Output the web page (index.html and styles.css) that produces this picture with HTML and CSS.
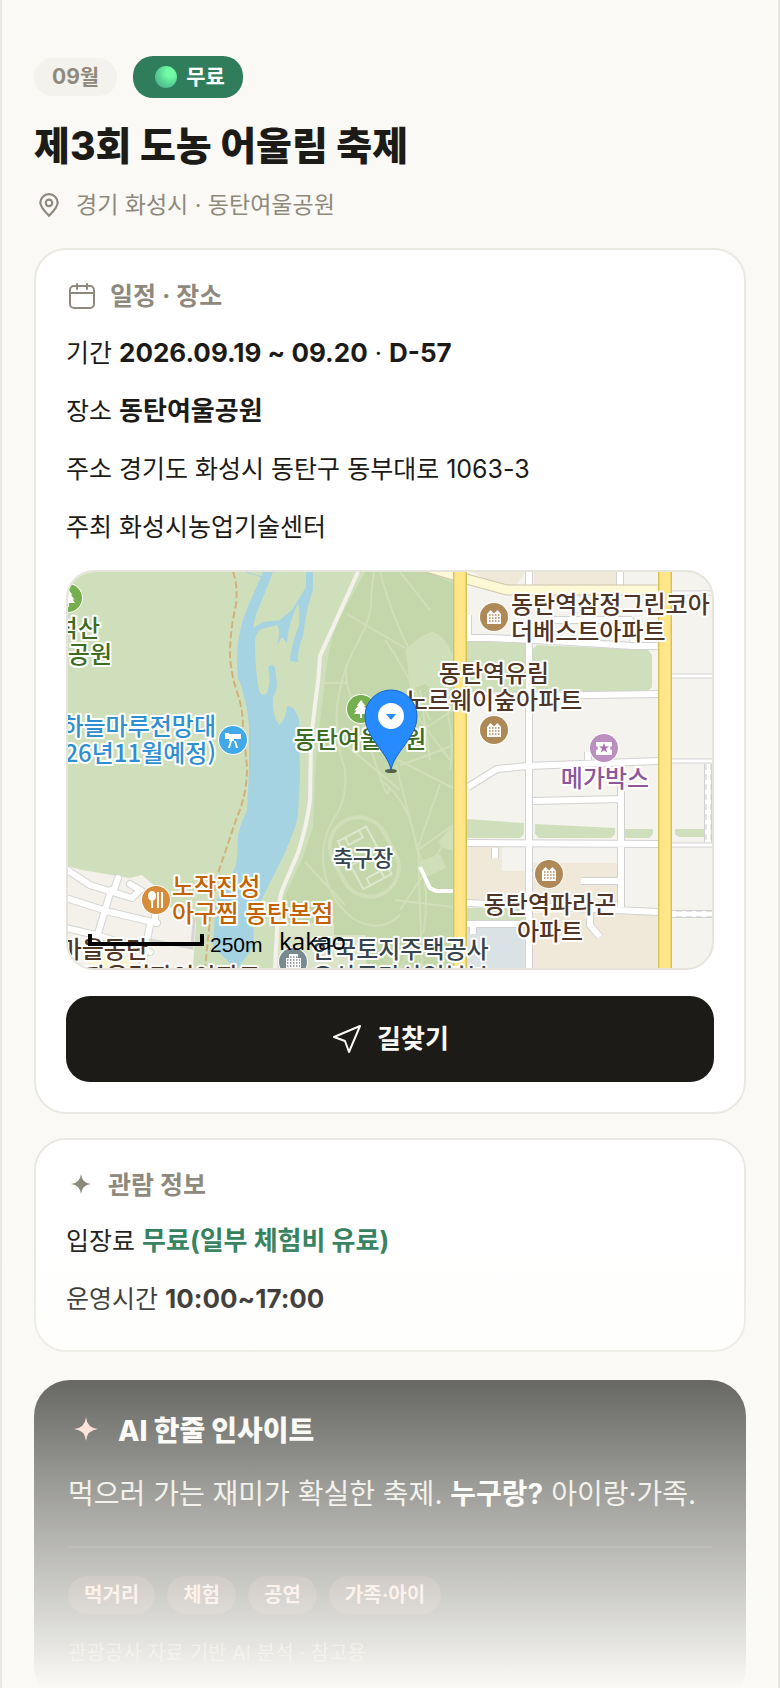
FILE: index.html
```html
<!DOCTYPE html>
<html lang="ko">
<head>
  <meta charset="UTF-8">
  <meta name="viewport" content="width=device-width, initial-scale=1.0">
  <title>제3회 도농 어울림 축제</title>
  <link rel="stylesheet" href="styles.css">
</head>
<body>
  <main class="page">
    <header class="hero">
      <div class="badges">
        <span class="badge">09월</span>
        <span class="badge badge-free"><span class="dot"></span>무료</span>
      </div>
      <h1>제3회 도농 어울림 축제</h1>
      <p class="location">
        <svg class="icon-pin" viewBox="0 0 24 24" fill="none" stroke="currentColor" stroke-width="2">
          <path d="M12 22c4.6-4.6 8-8.2 8-12a8 8 0 0 0-16 0c0 3.8 3.4 7.4 8 12z"/>
          <circle cx="12" cy="10" r="3"/>
        </svg>
        경기 화성시 · 동탄여울공원
      </p>
    </header>

    <section class="card">
      <h2>
        <svg class="icon-cal" viewBox="0 0 32 32" fill="none" stroke="currentColor" stroke-width="2" stroke-linecap="round">
          <rect x="4" y="6" width="24" height="22" rx="4"/>
          <path d="M4 13h24M11 4v5M21 4v5"/>
        </svg>
        일정 · 장소
      </h2>
      <p class="row">기간 <b>2026.09.19 ~ 09.20</b> · <b>D-57</b></p>
      <p class="row">장소 <b>동탄여울공원</b></p>
      <p class="row">주소 경기도 화성시 동탄구 동부대로 1063-3</p>
      <p class="row">주최 화성시농업기술센터</p>

      <div class="map">
        <svg viewBox="68 572 644 396" preserveAspectRatio="xMidYMid slice" role="img" aria-label="동탄여울공원 지도">
          <defs>
            <g id="apt">
              <circle r="15" fill="#fff"/>
              <circle r="14" fill="#ae8957"/>
              <path d="M-7 7V-3l3.500-4L0-3.500 3.500-7 7-3V7z" fill="#fff"/>
              <path d="M-5-2H6M-5 1H6M-5 4H6" stroke="#ae8957" stroke-width="1.500" stroke-dasharray="1.500 1.500"/>
            </g>
            <g id="tree">
              <circle r="15" fill="#fff"/>
              <circle r="14" fill="#76b04e"/>
              <path d="M0-9l4.500 6H3l3.500 4.500H4.500L7 5H1v4h-2V5h-6l2.500-3.500h-2L-3-3h-1.500z" fill="#fff"/>
            </g>
          </defs>

          <!-- land -->
          <rect x="68" y="572" width="644" height="396" fill="#d0dfbb"/>
          <path d="M365 572L345 608Q330 635 327 665Q321 710 316 760L313 827L303 857L283 900L278 968H460V586L428 572z" fill="#c4d7aa"/>
          <path d="M405 650Q420 635 432 632Q444 634 453 655V700L440 694L425 684L410 690L407 660zM453 825L438 842Q446 852 453 850zM418 862L440 854L446 868L424 878z" fill="#cfdfba"/>
          <path d="M279 923H334V935H366V968H276z" fill="#dbe3c8"/>

          <!-- park paths -->
          <g fill="none" stroke="#d0dfba" stroke-width="2">
            <path d="M374 572Q371 590 371 605C368 635 347 650 340 690C333 715 338 750 345 770Q347 795 338 812Q322 835 323 860Q325 895 352 918Q380 935 400 915"/>
            <path d="M380 572Q395 625 410 650M347 614L405 648M325 683H348M346 665Q345 695 360 712M340 740L400 790M353 700L385 790Q389 798 389 786M396 765L418 850L422 968M418 850L453 825M418 850Q430 880 424 930L400 968M405 700L450 760M398 760L453 788M420 690L430 760M453 710L400 745M445 700Q455 740 450 770M400 765Q430 755 453 745M440 784L417 850M400 910L453 830M395 900L453 907M380 780Q410 800 417 850M305 862L345 905M400 572L430 610M385 640Q400 660 430 720"/>
            <g transform="rotate(-28 362 857)">
              <rect x="335" y="817" width="58" height="82" rx="29" stroke-width="4"/>
              <rect x="348" y="832" width="32" height="54" stroke="#dce7cd"/>
              <path d="M348 859h32M356 832v8h16v-8M356 886v-8h16v8" stroke="#dce7cd"/>
            </g>
          </g>

          <!-- river -->
          <path d="M263 572L252 597Q242 620 241 627Q235 650 238 678Q243 690 243 693Q248 710 249 727L249 770L247 810Q238 830 238 837L237 857Q236 868 232 873L220 893Q214 905 215 915L213 947L227 960L232 968H238L253 947L254 920Q256 910 263 897L283 857Q297 825 298 815L300 777L299 720Q295 706 287 706Q286 720 279 725Q272 715 273 697Q277 690 277 683L275 668Q271 661 268 668Q271 680 268 690Q263 700 259 690Q255 670 255 640Q257 630 262 629L277 625Q281 630 277 645L282 637L287 643Q288 625 298 603Q300 612 299 625Q291 645 290 661L298 662Q297 650 303 636Q307 605 313 590V572H306V587L292 610L280 620L263 622L253 628Q255 615 262 600L273 572z" fill="#a6d3e1"/>
          <path d="M246 572L262 577" stroke="#a6d3e1"/>
          <path d="M233 572Q238 585 236 605Q230 630 230 655Q231 675 238 695Q243 710 243 727L247 767Q247 795 237 817L218 873Q213 895 210 920L205 968" fill="none" stroke="#d2b07c" stroke-width="2" stroke-dasharray="7 3"/>
          <path d="M358 572L320 656Q319 680 315 705L311 740L310 800Q307 825 298 853L283 888Q278 900 277 930L275 968" fill="none" stroke="#f4f1ec" stroke-width="4"/>

          <!-- west village -->
          <path d="M68 866L82 870L130 878L142 875L157 888V900L196 922L193 968H68z" fill="#f3f1ea"/>
          <path d="M92 955Q110 945 128 958L140 968H90z" fill="#fdf6d2"/>
          <g fill="none" stroke-linecap="round">
            <path d="M66 869L90 885L132 898M111 890L97 937M66 898L110 912L157 923M150 925L143 962M66 928L100 936L150 952M132 898L140 890L130 884M118 878L114 890M155 900V922" stroke="#d5d5d3" stroke-width="8"/>
            <path d="M66 869L90 885L132 898M111 890L97 937M66 898L110 912L157 923M150 925L143 962M66 928L100 936L150 952M132 898L140 890L130 884M118 878L114 890M155 900V922" stroke="#fff" stroke-width="6"/>
            <path d="M194 920L192 948L150 940" stroke="#d5d5d3" stroke-width="3"/>
          </g>

          <!-- east blocks -->
          <path d="M466 572H712V968H466z" fill="#f4f3ee"/>
          <path d="M474 572H525L514 589L490 584zM534 572H616V588H534zM467 847H502V871H527V902H467zM533 863H617V907H533zM533 913H658V968H533z" fill="#f0e8d9"/>
          <path d="M467 924H525V968H467z" fill="#dae2e6"/>
          <path d="M467 641L526 643V692H467zM537 645L648 650L652 655V687L648 691H533V649zM467 819L524 823V834L520 838H467zM535 824L615 828V834L611 838H539L535 834zM625 829H653V834L649 838H625zM675 829H706V837H679L675 834zM467 908H525V922H467z" fill="#d0dfbb"/>
          <g fill="none">
            <path d="M467 638H490L554 641L633 646H657M467 697L658 694M529 572V590M620 572V590M529 640V968M468 787L497 769L527 766L658 761M533 801L621 799M621 785V907M467 843L658 844M467 903L658 912M495 848V858M581 881H618M590 905V925L600 937M467 924H525M473 926V934M708 764V842M672 914H712M554 620H630Q636 624 633 642M468 615V636M588 760V752" stroke="#d2d2d2" stroke-width="8"/>
            <path d="M467 638H490L554 641L633 646H657M467 697L658 694M529 572V590M620 572V590M529 640V968M468 787L497 769L527 766L658 761M533 801L621 799M621 785V907M467 843L658 844M467 903L658 912M495 848V858M581 881H618M590 905V925L600 937M467 924H525M473 926V934M708 764V842M672 914H712M554 620H630Q636 624 633 642M468 615V636M588 760V752" stroke="#fff" stroke-width="6"/>
            <path d="M672 593H712M672 676H712M672 845H712M672 761H712" stroke="#d2d2d2" stroke-width="5"/>
            <path d="M672 593H712M672 676H712M672 845H712M672 761H712" stroke="#fff" stroke-width="3"/>
            <path d="M706 764V842M711 764V842M676 911H712M676 917H712" stroke="#cbcbcb" stroke-dasharray="6 4"/>
            <path d="M420 867L430 888L436 891H455" stroke="#fff" stroke-width="4"/>
            <path d="M430 568L470 580L507 590H658" stroke="#cfc6ac" stroke-width="11"/>
            <path d="M430 568L470 580L507 590H658" stroke="#fdf8d6" stroke-width="9"/>
            <path d="M460 572V968M665 572V968" stroke="#d8c25a" stroke-width="14"/>
            <path d="M460 572V968M665 572V968" stroke="#ffe788" stroke-width="11"/>
          </g>

          <!-- markers -->
          <use href="#apt" x="494" y="617"/>
          <use href="#apt" x="494" y="730"/>
          <use href="#apt" x="549" y="874"/>
          <use href="#tree" x="361" y="709"/>
          <use href="#tree" x="68" y="598"/>
          <g transform="translate(233 740)">
            <circle r="15" fill="#fff"/>
            <circle r="14" fill="#41a8ea"/>
            <path d="M-8-7h4v1H8v5H1v2H-4v-2h-4zM-3 1h2l-2 7h-2zM1 1h2l2 7H3z" fill="#fff"/>
          </g>
          <g transform="translate(156 900)">
            <circle r="15" fill="#fff"/>
            <circle r="14" fill="#d88b39"/>
            <ellipse cx="-4" cy="-4" rx="4" ry="5" fill="#fff"/>
            <path d="M-4 0V8M2-8V8M6-8V8" stroke="#fff" stroke-width="2"/>
          </g>
          <g transform="translate(604 748)">
            <circle r="15" fill="#fff"/>
            <circle r="14" fill="#bb8fbf"/>
            <path d="M-8-6H8v4a2 2 0 0 0 0 4v5H-8V2a2 2 0 0 0 0-4z" fill="#fff"/>
            <path d="M0-5l1.300 3.500H5L2 .8 3.200 4.500 0 2.300-3.200 4.500-2 .8-5-1.500h3.700z" fill="#a86fae"/>
          </g>
          <g transform="translate(293 962)">
            <circle r="15" fill="#fff"/>
            <circle r="14" fill="#7a8a92"/>
            <path d="M-7 9V-4h3v-4H5v4h3V9z" fill="#fff"/>
            <path d="M-3-5H5M-6-2H7M-6 1H7M-6 4H7" stroke="#7a8a92" stroke-width="1.500" stroke-dasharray="1.500 1.500"/>
          </g>

          <!-- labels -->
          <g class="label label-green">
            <text x="100" y="637" text-anchor="end">석산</text>
            <text x="112" y="663" text-anchor="end">공원</text>
            <text x="360" y="748" text-anchor="middle">동탄여울공원</text>
          </g>
          <g class="label label-blue" text-anchor="end">
            <text x="216" y="735">하늘마루전망대</text>
            <text x="216" y="762">26년11월예정)</text>
          </g>
          <g class="label label-brown">
            <text x="511" y="613">동탄역삼정그린코아</text>
            <text x="511" y="640">더베스트아파트</text>
            <text x="494" y="682" text-anchor="middle">동탄역유림</text>
            <text x="494" y="709" text-anchor="middle">노르웨이숲아파트</text>
            <text x="550" y="913" text-anchor="middle">동탄역파라곤</text>
            <text x="550" y="940" text-anchor="middle">아파트</text>
            <text x="148" y="958" text-anchor="end">마을동탄</text>
            <text x="84" y="985">자음린자이아파트</text>
          </g>
          <g class="label label-purple">
            <text x="605" y="787" text-anchor="middle">메가박스</text>
          </g>
          <g class="label label-orange">
            <text x="172" y="895">노작진성</text>
            <text x="172" y="922">아구찜 동탄본점</text>
          </g>
          <g class="label label-slate">
            <text class="label-small" x="363" y="866" text-anchor="middle">축구장</text>
            <text x="312" y="958">한국토지주택공사</text>
            <text x="312" y="985">오산동탄사업본부</text>
          </g>

          <!-- scale and provider -->
          <path d="M90 934V944H202V934" fill="none" stroke="#000" stroke-width="4"/>
          <text class="scale" x="210" y="952">250m</text>
          <text class="provider" x="279" y="950">kakao</text>

          <!-- selected place -->
          <ellipse cx="391" cy="771" rx="6" ry="2" fill="#556048"/>
          <path d="M391 770C388 752 365 738 365 716a26 26 0 0 1 52 0C417 738 394 752 391 770z" fill="#258bff" stroke="#1a62c4"/>
          <circle cx="391" cy="716" r="13" fill="#fff"/>
          <path d="M386 714h10l-5 6z" fill="#258bff"/>
        </svg>
      </div>

      <button class="route-btn" type="button">
        <svg class="icon-nav" viewBox="0 0 32 32" fill="none" stroke="currentColor" stroke-width="2" stroke-linejoin="round">
          <path d="M29 3L3 14l11 4 4 11z"/>
        </svg>
        길찾기
      </button>
    </section>

    <section class="card">
      <h2>
        <svg class="icon-star" viewBox="0 0 30 30" fill="currentColor">
          <path d="M15 4Q16 13 25 14Q16 15 15 24Q14 15 5 14Q14 13 15 4z"/>
        </svg>
        관람 정보
      </h2>
      <p class="row">입장료 <b class="free">무료(일부 체험비 유료)</b></p>
      <p class="row">운영시간 <b>10:00~17:00</b></p>
    </section>

    <section class="insight">
      <h2>
        <svg class="icon-spark" viewBox="0 0 34 34" fill="currentColor">
          <path d="M18 3Q19 14 30 15Q19 16 18 27Q17 16 6 15Q17 14 18 3z"/>
        </svg>
        AI 한줄 인사이트
      </h2>
      <p class="summary">먹으러 가는 재미가 확실한 축제. <b>누구랑?</b> 아이랑·가족.</p>
      <div class="chips">
        <span class="chip">먹거리</span>
        <span class="chip">체험</span>
        <span class="chip">공연</span>
        <span class="chip">가족·아이</span>
      </div>
      <p class="note">관광공사 자료 기반 AI 분석 · 참고용</p>
    </section>

    <div class="fade"></div>
  </main>
</body>
</html>
```

FILE: styles.css
```css
* {
  box-sizing: border-box;
}
body {
  margin: 0;
  background: #faf9f5;
  color: #1c1b17;
  font-family: Inter, "Noto Sans CJK KR", sans-serif;
}
.page {
  position: relative;
  height: 100vh;
  overflow: hidden;
  padding: 56px 32px 0;
  border-left: 2px solid #e9e8e2;
  border-right: 2px solid #e9e8e2;
}
h1, h2, p {
  margin: 0;
}
svg {
  display: block;
  flex-shrink: 0;
}

/* header */
.badges {
  display: flex;
  align-items: center;
  gap: 16px;
}
.badge {
  padding: 0 18px;
  border-radius: 20px;
  background: #f3f2ed;
  color: #8e897c;
  font-size: 21px;
  font-weight: 700;
  line-height: 38px;
}
.badge-free {
  display: flex;
  align-items: center;
  gap: 9px;
  padding-left: 22px;
  background: #2f7d5b;
  color: #fff;
  line-height: 42px;
}
.dot {
  width: 22px;
  height: 22px;
  border-radius: 50%;
  background: radial-gradient(circle at 70% 30%, #72fba4 20%, #5ad895 50%, #4a9d90 100%);
}
h1 {
  margin-top: 18px;
  font-size: 39px;
  line-height: 60px;
  font-weight: 800;
}
.location {
  display: flex;
  align-items: center;
  gap: 14px;
  margin: 10px 0 24px;
  padding-left: 2px;
  color: #8e897c;
  font-size: 23px;
  line-height: 38px;
}
.icon-pin {
  width: 26px;
  height: 26px;
}

/* cards */
.card {
  margin-bottom: 24px;
  padding: 30px;
  border: 2px solid #eae8e2;
  border-radius: 32px;
  background: #fff;
}
.card h2 {
  display: flex;
  align-items: center;
  gap: 12px;
  margin-bottom: 20px;
  color: #8e897c;
  font-size: 25px;
  line-height: 30px;
}
.icon-cal {
  width: 32px;
  height: 32px;
}
.icon-star {
  width: 30px;
  height: 30px;
}
.row {
  font-size: 25px;
  line-height: 42px;
}
.row + .row {
  margin-top: 16px;
}
.row b {
  font-size: 26px;
  line-height: 40px;
}
.free {
  color: #2f7d5b;
}

/* map */
.map {
  height: 400px;
  margin: 22px 0 26px;
  border: 2px solid #e6e4dc;
  border-radius: 28px;
  overflow: hidden;
}
.map svg {
  width: 100%;
  height: 100%;
}
.label {
  font-family: "Noto Sans CJK KR", sans-serif;
  font-size: 24px;
  font-weight: 500;
  stroke: #fff;
  stroke-width: 4px;
  stroke-linejoin: round;
  paint-order: stroke;
}
.label-small {
  font-size: 22px;
}
.label-green { fill: #3d6b22; }
.label-blue { fill: #2f8fd0; }
.label-brown { fill: #4f3526; }
.label-purple { fill: #8f559b; }
.label-orange { fill: #c26200; }
.label-slate { fill: #36444f; }
.scale {
  font-family: "Liberation Sans", sans-serif;
  font-size: 21px;
}
.provider {
  font-family: "Noto Sans", sans-serif;
  font-size: 24px;
}
.route-btn {
  display: flex;
  align-items: center;
  justify-content: center;
  gap: 14px;
  width: 100%;
  height: 86px;
  border: none;
  border-radius: 24px;
  background: #1c1b17;
  color: #faf9f5;
  font-family: inherit;
  font-size: 26px;
  font-weight: 700;
  line-height: 32px;
  cursor: pointer;
}
.icon-nav {
  width: 32px;
  height: 32px;
}

/* insight */
.insight {
  margin-top: 28px;
  padding: 34px;
  border-radius: 36px;
  background: #1c1b17;
  color: #faf9f5;
}
.insight h2 {
  display: flex;
  align-items: center;
  gap: 16px;
  font-size: 28px;
  font-weight: 800;
  line-height: 34px;
}
.icon-spark {
  width: 34px;
  height: 34px;
  color: #ffd2c4;
}
.summary {
  margin-top: 22px;
  padding-bottom: 28px;
  border-bottom: 2px solid #32312d;
  color: #e8e6df;
  font-size: 28px;
  line-height: 48px;
}
.summary b {
  color: #fff;
}
.chips {
  display: flex;
  gap: 12px;
  margin-top: 28px;
}
.chip {
  padding: 0 16px;
  border-radius: 20px;
  background: #4a3630;
  color: #ffd2c4;
  font-size: 20px;
  font-weight: 700;
  line-height: 38px;
}
.note {
  margin-top: 24px;
  color: #98958b;
  font-size: 20px;
  line-height: 30px;
}
.fade {
  position: absolute;
  left: 0;
  right: 0;
  bottom: 0;
  height: 468px;
  background: linear-gradient(rgba(250, 250, 246, 0), rgba(250, 250, 246, 0.35) 35%, rgba(250, 250, 246, 0.6) 59%, rgba(250, 250, 246, 0.8) 80%, #faf9f5);
}
```
